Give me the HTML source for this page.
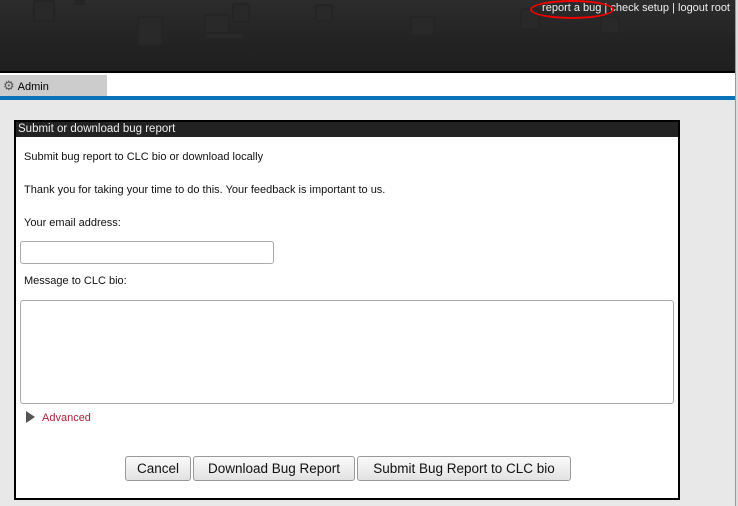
<!DOCTYPE html>
<html><head><style>
body{margin:0;width:738px;height:506px;overflow:hidden;background:#e8e8e8;font-family:"Liberation Sans",sans-serif;position:relative}
.hdr{position:absolute;left:0;top:0;width:735px;height:71px;background:linear-gradient(#2c2c2c,#232323 60%,#1f1f1f);border-bottom:2px solid #000}
.sq{position:absolute;background:#292929;border-radius:3px;box-shadow:inset 0 0 2px #1d1d1d}
.links{position:absolute;right:8px;top:2px;color:#eee;font-size:11px}
.oval{position:absolute;left:530px;top:0;width:80px;height:15px;border:2px solid #e00;border-radius:50%}
.band{position:absolute;left:0;top:73px;width:735px;height:23px;background:#fff}
.tab{position:absolute;left:0;top:75px;width:107px;height:21px;background:#ccc;font-size:11px;line-height:21px}
.blue{position:absolute;left:0;top:96px;width:735px;height:4px;background:#0a72b8}
.sb{position:absolute;left:735px;top:0;width:3px;height:506px;background:#ddd;border-left:1px solid #999}
.dlg{position:absolute;left:14px;top:120px;width:662px;height:376px;border:2px solid #000;background:#fff}
.tt{background:#222;color:#eee;font-size:11.5px;height:15px;line-height:15px;padding-left:2px}
.c{position:absolute;font-size:11px;color:#111}
.inp{position:absolute;border:1px solid #aaa;border-radius:3px;background:#fff}
.btn{position:absolute;top:456px;height:23px;border:1px solid #999;border-radius:3px;background:linear-gradient(#fafafa,#e2e2e2);font-size:13.5px;line-height:23px;text-align:center;color:#111}
</style></head><body>
<div class="hdr">
<div class="sq" style="left:33px;top:0;width:22px;height:22px"></div>
<div class="sq" style="left:75px;top:0;width:10px;height:5px"></div>
<div class="sq" style="left:137px;top:16px;width:26px;height:30px"></div>
<div class="sq" style="left:204px;top:14px;width:26px;height:22px"></div>
<div class="sq" style="left:232px;top:3px;width:18px;height:20px"></div>
<div class="sq" style="left:315px;top:4px;width:18px;height:18px"></div>
<div class="sq" style="left:410px;top:16px;width:25px;height:20px"></div>
<div class="sq" style="left:205px;top:32px;width:40px;height:8px"></div>
<div class="sq" style="left:520px;top:8px;width:20px;height:22px"></div>
<div class="sq" style="left:600px;top:16px;width:20px;height:18px"></div>
</div>
<div class="links">report a bug | check setup | logout root</div>
<div class="oval"></div>
<div class="band"></div>
<div class="tab"><span style="font-size:13px;color:#555;margin:0 3px 0 3px">⚙</span>Admin</div>
<div class="blue"></div>
<div class="sb"></div>
<div class="dlg"><div class="tt">Submit or download bug report</div></div>
<div class="c" style="left:24px;top:151px">Submit bug report to CLC bio or download locally</div>
<div class="c" style="left:24px;top:184px">Thank you for taking your time to do this. Your feedback is important to us.</div>
<div class="c" style="left:24px;top:217px">Your email address:</div>
<div class="inp" style="left:20px;top:241px;width:252px;height:21px"></div>
<div class="c" style="left:24px;top:275px">Message to CLC bio:</div>
<div class="inp" style="left:20px;top:300px;width:652px;height:102px"></div>
<div style="position:absolute;left:26px;top:411px;width:0;height:0;border-left:9px solid #555;border-top:6px solid transparent;border-bottom:6px solid transparent"></div>
<div class="c" style="left:42px;top:412px;color:#b0203a">Advanced</div>
<div class="btn" style="left:125px;width:64px">Cancel</div>
<div class="btn" style="left:193px;width:160px">Download Bug Report</div>
<div class="btn" style="left:357px;width:212px">Submit Bug Report to CLC bio</div>
</body></html>
